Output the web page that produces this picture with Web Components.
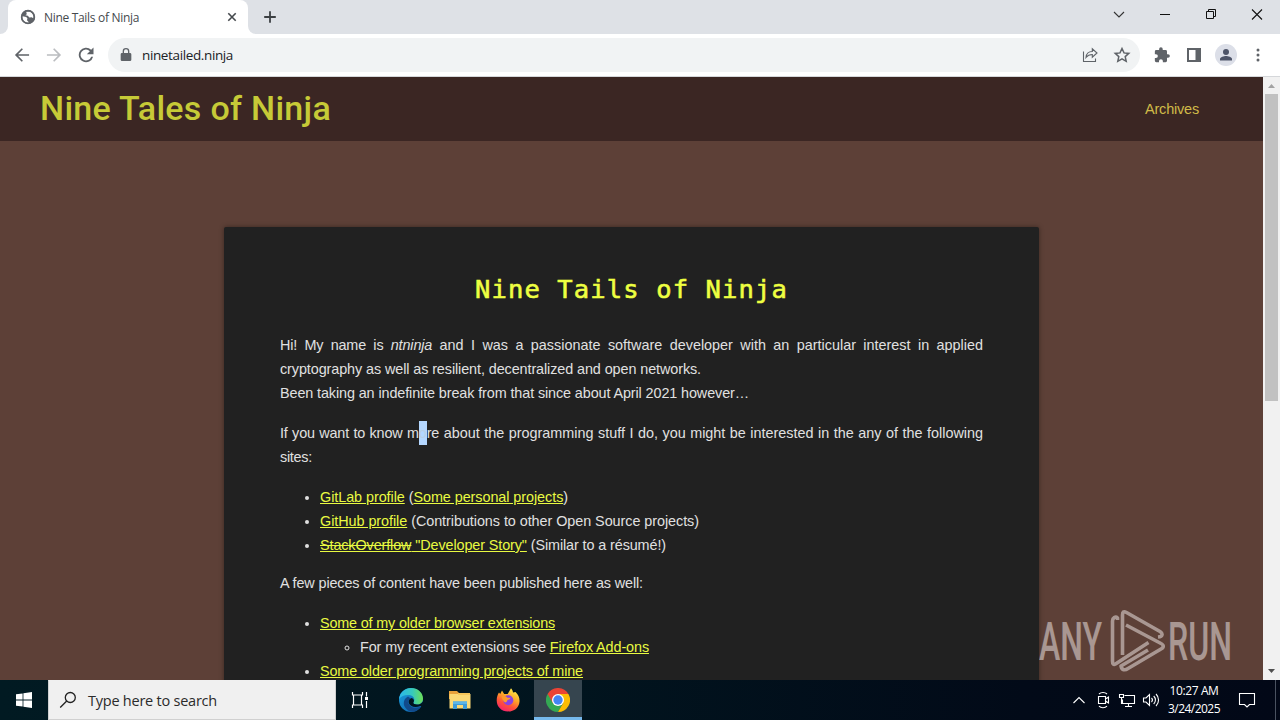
<!DOCTYPE html>
<html lang="en">
<head>
<meta charset="utf-8">
<title>Nine Tails of Ninja</title>
<style>
    html, body { margin: 0; height: 100%; overflow: hidden; }
    body { font-family: "Liberation Sans", Arial, sans-serif; }
</style>
</head>
<body>
<desktop-screen></desktop-screen>

<script>
// shared helper: attach an open root and fill it
class BaseElement extends HTMLElement {
    constructor() {
        super();
        this.attachShadow({ mode: 'open' });
    }

    connectedCallback() {
        this.shadowRoot.innerHTML = this.render();
    }
}

class DesktopScreen extends BaseElement {
    render() {
        return `
            <style>
                :host { display: flex; flex-direction: column; width: 1280px; height: 720px; position: relative; overflow: hidden; }
                .view { flex: 1; min-height: 0; display: flex; }
                ninja-site { flex: 1; }
                run-watermark { position: absolute; left: 1036px; top: 606px; }
            </style>
            <browser-tabs></browser-tabs>
            <browser-toolbar></browser-toolbar>
            <div class="view">
                <ninja-site></ninja-site>
                <scroll-bar></scroll-bar>
            </div>
            <task-bar></task-bar>
            <run-watermark></run-watermark>
        `;
    }
}

class BrowserTabs extends BaseElement {
    render() {
        return `
            <style>
                :host { display: flex; height: 34px; background: #dee1e6; font-family: "Open Sans", sans-serif; color: #45494d; }
                svg { display: block; }
                .edge { width: 8px; background: #fff; }
                .edge i { display: block; height: 34px; background: #dee1e6; }
                .edge.l i { border-bottom-right-radius: 8px; }
                .edge.r i { border-bottom-left-radius: 8px; }
                .tab { box-sizing: border-box; width: 240px; background: #fff; border-radius: 8px 8px 0 0; padding: 0 8px 0 12px; display: flex; align-items: center; }
                .tab fit-text { margin-left: 8px; font-size: 12px; flex: 1; }
                .plus { margin: 10px 0 0 7px; }
                .window { margin-left: auto; display: flex; align-items: center; height: 29px; }
                .window svg { width: 46px; }
            </style>
            <div class="edge l"><i></i></div>
            <div class="tab">
                <svg width="16" height="16" viewBox="0 0 16 16">
                    <circle cx="8" cy="8" r="7" fill="#5f6368"/>
                    <path d="M2.6 7.2 6.2 8 7.4 9.2 7 11.2 9 13.4C5 14 2 11 2.6 7.2Z" fill="#fff"/>
                    <path d="M6.2 2.7 10 2.8C12.6 4 13.8 6.6 13.3 9.3L11.6 8.2 9.4 8.6 7.8 6.8 5.4 6.3 6.8 5.2Z" fill="#fff"/>
                    <circle cx="8" cy="8" r="6.5" fill="none" stroke="#5f6368" stroke-width="1.4"/>
                </svg>
                <fit-text w="95">Nine Tails of Ninja</fit-text>
                <svg width="16" height="16" viewBox="0 0 16 16"><path d="m4.3 4.3 7.4 7.4m0-7.4-7.4 7.4" stroke="#45494d" stroke-width="1.6"/></svg>
            </div>
            <div class="edge r"><i></i></div>
            <svg class="plus" width="14" height="14" viewBox="0 0 14 14"><path d="M7 1.2v11.6M1.2 7h11.6" stroke="#3c4043" stroke-width="1.8"/></svg>
            <div class="window">
                <svg height="29" viewBox="0 0 46 29"><path d="m18 12 5 5 5-5" fill="none" stroke="#333" stroke-width="1.1"/></svg>
                <svg height="29" viewBox="0 0 46 29"><path d="M18 14.5h10" stroke="#111"/></svg>
                <svg height="29" viewBox="0 0 46 29"><path d="M18.5 11.5h7v7h-7zM20.5 11V9.5h7v7H26" fill="none" stroke="#111"/></svg>
                <svg height="29" viewBox="0 0 46 29"><path d="m18 9.5 10 10m0-10-10 10" stroke="#111" stroke-width="1.1"/></svg>
            </div>
        `;
    }
}

class BrowserToolbar extends BaseElement {
    render() {
        return `
            <style>
                :host { box-sizing: border-box; display: flex; align-items: center; height: 43px; background: #fff; border-bottom: 1px solid #d5d7da; padding: 0 12px; font-family: "Open Sans", sans-serif; }
                svg { display: block; fill: #5f6368; }
                .nav { display: flex; gap: 12px; }
                .nav .off { fill: #bbbdc0; }
                .omni { box-sizing: border-box; margin-left: 12px; width: 1032px; height: 34px; border-radius: 17px; background: #f1f3f4; display: flex; align-items: center; padding: 0 8px 0 10px; }
                .omni fit-text { flex: 1; margin-left: 8px; font-size: 13.5px; color: #202124; }
                .omni .share { margin-right: 12px; }
                .tools { display: flex; align-items: center; margin-left: 12px; gap: 12px; }
                .user { width: 22px; height: 22px; border-radius: 50%; background: #dcdfe8; margin: 0 -1px; display: flex; align-items: center; justify-content: center; }
                .nav, .omni, .tools { flex: none; }
            </style>
            <div class="nav">
                <svg width="20" height="20" viewBox="0 0 24 24"><path d="M20.5 11H7.3l5.800-5.800L11.700 3.800 3.500 12l8.200 8.200 1.400-1.400L7.300 13h13.200z"/></svg>
                <svg class="off" width="20" height="20" viewBox="0 0 24 24"><path d="M3.500 11h13.200l-5.800-5.800 1.400-1.400 8.200 8.200-8.200 8.200-1.400-1.400 5.800-5.800H3.500z"/></svg>
                <svg width="20" height="20" viewBox="0 0 24 24"><path d="M18.200 5.800A8.700 8.700 0 1 0 20.500 14h-2.300A6.500 6.500 0 1 1 16.600 7.400L13 11h8V3z"/></svg>
            </div>
            <div class="omni">
                <svg width="16" height="16" viewBox="0 0 24 24"><path d="M18 9h-1V6.500a5 5 0 0 0-10 0V9H6a2 2 0 0 0-2 2v8a2 2 0 0 0 2 2h12a2 2 0 0 0 2-2v-8a2 2 0 0 0-2-2zM9 6.500a3 3 0 0 1 6 0V9H9z"/></svg>
                <fit-text w="91">ninetailed.ninja</fit-text>
                <svg class="share" width="20" height="20" viewBox="0 0 20 20"><path d="M3.500 6.500v10h12v-3M6 12.500c.3-3.600 2.400-6 6.300-6V3.800L17 8l-4.700 4.200V9.500c-2.800 0-4.700.9-6.300 3z" fill="none" stroke="#5f6368" stroke-width="1.1"/></svg>
                <svg width="20" height="20" viewBox="0 0 20 20"><path d="m10 3.500 2 4.400 4.800.5-3.600 3.200 1 4.700L10 13.900l-4.200 2.400 1-4.700-3.600-3.200 4.800-.5z" fill="none" stroke="#5f6368" stroke-width="1.5"/></svg>
            </div>
            <div class="tools">
                <svg width="20" height="20" viewBox="-2 -2 28 28"><path d="M20.500 11H19V7a2 2 0 0 0-2-2h-4V3.500a2.500 2.500 0 0 0-5 0V5H4a2 2 0 0 0-2 2v3.800h1.500a2.700 2.700 0 0 1 0 5.400H2V20a2 2 0 0 0 2 2h3.800v-1.500a2.700 2.700 0 0 1 5.400 0V22H17a2 2 0 0 0 2-2v-4h1.500a2.500 2.500 0 0 0 0-5z"/></svg>
                <svg width="20" height="20" viewBox="0 0 20 20"><path d="M3 3h14v14H3zM5 5v10h6.500V5z" fill-rule="evenodd"/></svg>
                <div class="user"><svg width="14" height="14" viewBox="0 0 14 14"><circle cx="7" cy="4" r="3" fill="#4d5468"/><path d="M1 12.500V11c0-2 4-3 6-3s6 1 6 3v1.500z" fill="#4d5468"/></svg></div>
                <svg width="20" height="20" viewBox="0 0 20 20"><circle cx="10" cy="5" r="1.500"/><circle cx="10" cy="10" r="1.500"/><circle cx="10" cy="15" r="1.500"/></svg>
            </div>
        `;
    }
}

class ScrollBar extends BaseElement {
    render() {
        return `
            <style>
                :host { display: flex; flex-direction: column; align-items: center; width: 17px; background: #f1f1f1; }
                i { width: 13px; height: 307px; background: #c1c1c1; margin-bottom: auto; }
                svg { display: block; }
            </style>
            <svg width="17" height="17"><path d="M5 11h7L8.500 7z" fill="#a3a3a3"/></svg>
            <i></i>
            <svg width="17" height="17"><path d="M5 6h7l-3.500 4z" fill="#505050"/></svg>
        `;
    }
}

class NinjaSite extends BaseElement {
    render() {
        return `
            <style>
                :host { display: flex; flex-direction: column; overflow: hidden; background: #5d4037; }
                header { box-sizing: border-box; flex: none; height: 64px; background: #3b2623; display: flex; align-items: center; justify-content: space-between; padding: 0 64px 0 40px; }
                .brand { font: 500 34px/60px Roboto, sans-serif; color: #c6ca37; padding-bottom: 2px; }
                .menu { font-size: 14.5px; color: #d0ba48; }
                post-card { margin: 86px 224px 0; flex: none; }
                strong { font-weight: normal; background: #b4d7ff; color: #b9cfe6; padding: 4px 0; }
                .near { letter-spacing: -.14px; }
            </style>
            <header>
                <fit-text class="brand" w="291">Nine Tales of Ninja</fit-text>
                <fit-text class="menu" w="54">Archives</fit-text>
            </header>
            <post-card>
                <fit-text slot="title" w="313">Nine Tails of Ninja</fit-text>
                <p><fit-text w="703" words><span class="near">Hi! My name is <em>ntninja</em></span> and I was a passionate software developer with an particular interest in applied</fit-text><fit-text w="421">cryptography as well as resilient, decentralized and open networks.</fit-text><fit-text w="469">Been taking an indefinite break from that since about April 2021 however…</fit-text></p>
                <p><fit-text w="703" words><span class="near">If you want to know m<strong>o</strong>re</span> about the programming stuff I do, you might be interested in the any of the following</fit-text><fit-text w="32">sites:</fit-text></p>
                <ul>
                    <li><fit-text w="248"><a>GitLab profile</a> (<a>Some personal projects</a>)</fit-text></li>
                    <li><fit-text w="379"><a>GitHub profile</a> (Contributions to other Open Source projects)</fit-text></li>
                    <li><fit-text w="346"><a><s>StackOverflow</s> "Developer Story"</a> (Similar to a résumé!)</fit-text></li>
                </ul>
                <p class="tight"><fit-text w="363">A few pieces of content have been published here as well:</fit-text></p>
                <ul>
                    <li><fit-text w="235"><a>Some of my older browser extensions</a></fit-text>
                        <ul><li><fit-text w="289">For my recent extensions see <a>Firefox Add-ons</a></fit-text></li></ul>
                    </li>
                    <li><fit-text w="263"><a>Some older programming projects of mine</a></fit-text></li>
                </ul>
            </post-card>
        `;
    }
}

class PostCard extends BaseElement {
    render() {
        return `
            <style>
                :host { display: block; box-sizing: border-box; height: 600px; background: #212121; border-radius: 2px; padding: 42px 56px 0; box-shadow: 0 0 5px rgba(0, 0, 0, .4); color: #e0e0e0; font-size: 14.4px; line-height: 24px; }
                h1 { margin: 0 0 24px; display: flex; justify-content: center; font: 400 25.5px/40px "DejaVu Sans Mono", monospace; color: #eeff41; -webkit-text-stroke: .6px #eeff41; }
                ::slotted(p) { margin: 0 0 16px; }
                ::slotted(ul) { margin: 0 0 14px; padding-left: 40px; }
            </style>
            <h1><slot name="title"></slot></h1>
            <slot></slot>
        `;
    }

    connectedCallback() {
        super.connectedCallback();
        // links live in the light tree, out of reach of ::slotted
        this.querySelectorAll('a').forEach((a) => {
            a.style.color = '#e9fa41';
            a.style.textDecoration = 'underline';
        });
    }
}

class TaskBar extends BaseElement {
    render() {
        return `
            <style>
                :host { flex: none; display: flex; height: 40px; background: linear-gradient(90deg, #011a22, #01141e 45%, #020a18 80%, #020817); font-family: "Open Sans", sans-serif; color: #fff; }
                svg { display: block; }
                .item { width: 48px; height: 40px; display: flex; align-items: center; justify-content: center; }
                .search { box-sizing: border-box; width: 288px; background: #f0f0f0; border: 1px solid #d0d0d0; border-top-color: #f0f0f0; color: #2b2b2b; display: flex; align-items: center; padding-left: 10px; font-size: 14.5px; }
                .search fit-text { margin-left: 11px; }
                .edge { width: 54px; }
                .files { width: 44px; }
                .fox { width: 52px; }
                .on { box-sizing: border-box; background: #36454f; border-bottom: 3px solid #76b9ed; padding-top: 3px; }
                .tray { margin-left: auto; display: flex; align-items: center; }
                .tray svg { width: 24px; height: 24px; fill: none; stroke: #fff; stroke-width: 1.1; }
                .clock { width: 62px; display: flex; flex-direction: column; align-items: center; font-size: 12px; line-height: 18px; }
                .tray .note { width: 44px; }
                .peek { width: 4px; height: 40px; border-left: 1px solid #4a5260; margin-left: 6px; }
            </style>
            <div class="item"><svg width="16" height="16" viewBox="0 0 16 16" fill="#fff"><path d="M0 2.300 6.600 1.400v6.200H0zM7.400 1.300 16 0v7.600H7.400zM0 8.400h6.600v6.200L0 13.700zM7.400 8.400H16V16l-8.600-1.300z"/></svg></div>
            <div class="search">
                <svg width="18" height="18" viewBox="0 0 18 18" fill="none" stroke="#222" stroke-width="1.3"><circle cx="11.300" cy="6.500" r="5"/><path d="m7.700 10-6.500 6.500"/></svg>
                <fit-text w="129">Type here to search</fit-text>
            </div>
            <div class="item">
                <svg width="18" height="18" viewBox="0 0 18 18" fill="none" stroke="#fff" stroke-width="1.2"><path d="M1.500 1v3h10V1M1.500 17v-3h10v3M2.500 4v10M10.500 4v10M15.500 1v4.500M15.500 10v7"/><path d="M14 6h3v3h-3z" fill="#fff" stroke="none"/></svg>
            </div>
            <div class="item edge">
                <svg width="24" height="24" viewBox="0 0 24 24">
                    <defs>
                        <linearGradient id="eg" x1="0" x2="1"><stop offset="0" stop-color="#2bb7ed"/><stop offset=".55" stop-color="#36c9bd"/><stop offset="1" stop-color="#6ddf55"/></linearGradient>
                        <linearGradient id="eb" x2="1" y2="1"><stop offset="0" stop-color="#1aa0df"/><stop offset="1" stop-color="#0e5aa5"/></linearGradient>
                    </defs>
                    <circle cx="12" cy="12" r="12" fill="url(#eb)"/>
                    <path d="M0 11C1 4 6 0 12 0c7 0 12 5 12 10.500 0 4-3 6-6 6-2.500 0-4-.8-3.600-2 .5-1 .9-1.600.9-2.700C15.300 9 12.700 7 9 7c-4 0-7 1.500-9 4z" fill="url(#eg)"/>
                    <path d="M9 8.500c-4 2-5.500 7-2.800 11 2 3 5 4.500 8 4.200 3.500-.5 6-2.500 7.500-5-6 2.500-11.500 0-12.300-4-.4-2 .7-3.500 2.300-4.300z" fill="#114a8b"/>
                    <path d="M12.500 10c-2.200 1-3.300 2.800-2.700 5 .9 3.300 5.800 5.300 11.600 3 .7-.3 1.300.2.900.8 1-1 2-3.600 2-5.800-1.800 2.800-3.900 3.500-6.300 3.500-2.500 0-4-.8-3.600-2 .7-1.300 1.300-3.300-1.900-4.500z" fill="#01141e"/>
                </svg>
            </div>
            <div class="item files">
                <svg width="22" height="20" viewBox="0 0 22 20">
                    <path d="M0 1h8l2 2h11v6H0z" fill="#e9a23b"/><path d="M1 4h20.500v14.500H.5V4z" fill="#fcd975"/><path d="M9 3h12v2H9z" fill="#f7c65a"/>
                    <path d="M4 19v-7.500h14V19h-4v-4H8v4z" fill="#3f9bd8"/><path d="M4 11.500h14V14H4z" fill="#5db5e8"/>
                </svg>
            </div>
            <div class="item fox">
                <svg width="24" height="24" viewBox="0 0 24 24">
                    <defs><linearGradient id="fx" x1=".8" y1="0" x2=".3" y2="1"><stop offset="0" stop-color="#fff34f"/><stop offset=".4" stop-color="#ffa928"/><stop offset=".7" stop-color="#ff5238"/><stop offset="1" stop-color="#f4206f"/></linearGradient></defs>
                    <path d="M3 4.500 4.200 6 6 2.500 8.200 6h3.500L15 .3c1.200 1.200 1.800 2.800 2 4.200l2.500-.5c3 2.700 4.300 6 4 9.700-.6 6-5.200 9.800-11.500 9.800C5.500 23.500.7 18.800.7 12.500.7 9 1.700 6.500 3 4.500z" fill="url(#fx)"/>
                    <circle cx="12.300" cy="12.300" r="5" fill="#8b42e0"/>
                    <path d="M5.500 8c2.200-.8 4.500 0 6 1.700h3c-.3 1.500-1.600 2-3 2.300-.6.700-.4 2.200-2.200 2.400-1.800-1-3.500-3.200-3.800-6.400z" fill="#ff9a2b"/>
                </svg>
            </div>
            <div class="item on">
                <svg width="24" height="24" viewBox="0 0 24 24">
                    <path d="M1.600 6A12 12 0 0 0 12 24l5.200-9z" fill="#34a853"/>
                    <path d="M22.400 6A12 12 0 0 1 12 24l5.200-9L12 6z" fill="#fbbc04"/>
                    <path d="M1.600 6A12 12 0 0 1 22.400 6H12L9 8.500 6.800 15z" fill="#ea4335"/>
                    <circle cx="12" cy="12" r="6" fill="#fff"/><circle cx="12" cy="12" r="4.700" fill="#4285f4"/>
                </svg>
            </div>
            <div class="tray">
                <svg viewBox="0 0 24 24"><path d="m6.500 15 5.500-5.500 5.500 5.500"/></svg>
                <svg viewBox="0 0 24 24"><path d="M7.500 8.500h7v7h-7zM14.500 11l3-2v6l-3-2M8 6c2-2 6-2 8 0M8 18.200c2 2 6 2 8 0"/></svg>
                <svg viewBox="0 0 24 24"><path d="M9.500 7.500h10v8h-12v-4M13.500 15.500v3M10 18.500h7M4.500 6.500h4v3h-4zM6.500 9.500v6.500"/></svg>
                <svg viewBox="0 0 24 24"><path d="M4.500 10h2.500l3.500-3.500v11L7 14H4.500zM12.500 10c1.200 1.200 1.200 2.800 0 4M14.700 8c2.300 2.300 2.300 5.700 0 8M17 6c3.400 3.400 3.400 8.600 0 12"/></svg>
                <div class="clock"><fit-text w="49">10:27 AM</fit-text><fit-text w="52">3/24/2025</fit-text></div>
                <svg class="note" viewBox="0 0 44 24"><path d="M14.500 5.500h15v11h-5l-2.500 2.500-2.500-2.500h-5z"/></svg>
                <div class="peek"></div>
            </div>
        `;
    }
}

class RunWatermark extends BaseElement {
    render() {
        return `
            <style>
                :host { display: block; opacity: .52; }
                svg { display: block; overflow: visible; font: 500 53px Roboto, sans-serif; fill: #f0e8e6; }
            </style>
            <svg width="210" height="70" viewBox="0 0 210 70">
                <text x="3" y="54" textLength="63" lengthAdjust="spacingAndGlyphs">ANY</text>
                <text x="132" y="54" textLength="64" lengthAdjust="spacingAndGlyphs">RUN</text>
                <g fill="none" stroke="#f0e8e6" stroke-width="3.600" stroke-linejoin="round">
                    <path d="M81.500 14v-2c-2-2-5 0-5 3v40c0 3 1 4 3 3l33-21.500"/>
                    <path d="M86.500 49V9c0-3 1-4 4-2.500L124 25.500c3 2 3 5-2 5.500"/>
                    <path d="M90 19l35 18.500c3 1.500 3 4 0 5.500L92 62.500c-3 2-6 2-7-2.500l27-16"/>
                </g>
            </svg>
        `;
    }
}

// <fit-text w="120">: spreads its slotted text to the given width
class FitText extends BaseElement {
    render() {
        return `
            <style>
                :host { display: block; white-space: nowrap; }
                span { display: inline-block; vertical-align: top; }
            </style>
            <span><slot></slot></span>
        `;
    }

    connectedCallback() {
        super.connectedCallback();
        const span = this.shadowRoot.querySelector('span');
        const text = this.textContent;
        const byWord = this.hasAttribute('words');
        const count = byWord ? text.split(' ').length - 1 : text.length;
        const gap = (Number(this.getAttribute('w')) - span.getBoundingClientRect().width) / count;
        span.style[byWord ? 'wordSpacing' : 'letterSpacing'] = `${gap}px`;
    }
}

customElements.define('desktop-screen', DesktopScreen);
customElements.define('browser-tabs', BrowserTabs);
customElements.define('browser-toolbar', BrowserToolbar);
customElements.define('scroll-bar', ScrollBar);
customElements.define('ninja-site', NinjaSite);
customElements.define('post-card', PostCard);
customElements.define('task-bar', TaskBar);
customElements.define('run-watermark', RunWatermark);
customElements.define('fit-text', FitText);
</script>
</body>
</html>
